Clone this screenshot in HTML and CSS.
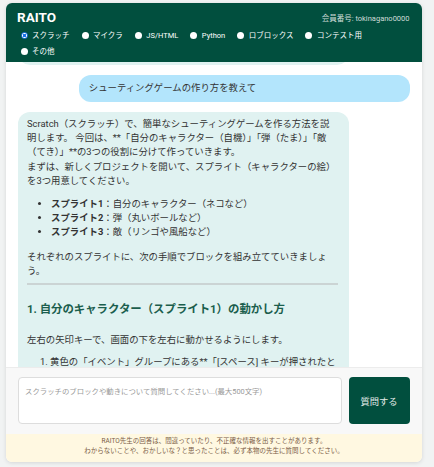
FILE: index.html
```html
<!DOCTYPE html>
<html lang="ja">
<head>
    <meta charset="UTF-8">
    <meta name="viewport" content="width=device-width, initial-scale=1.0">
    <title>RAITO</title>
    <link rel="stylesheet" href="styles.css">
</head>
<body>
    <div class="app">
        <header class="header">
            <div class="header-top">
                <h1 class="logo">RAITO</h1>
                <span class="member">会員番号: tokinagano0000</span>
            </div>
            <div class="courses">
                <label class="course"><input type="radio" name="course" value="scratch" checked>スクラッチ</label>
                <label class="course"><input type="radio" name="course" value="minecraft">マイクラ</label>
                <label class="course"><input type="radio" name="course" value="web">JS/HTML</label>
                <label class="course"><input type="radio" name="course" value="python">Python</label>
                <label class="course"><input type="radio" name="course" value="roblox">ロブロックス</label>
                <label class="course"><input type="radio" name="course" value="contest">コンテスト用</label>
                <label class="course"><input type="radio" name="course" value="other">その他</label>
            </div>
        </header>

        <main class="chat-log" id="chat-log">
            <div class="message bot">
                <p>こんにちは！RAITO先生です。スクラッチのことなら、なんでも聞いてくださいね。</p>
            </div>
            <div class="message user">シューティングゲームの作り方を教えて</div>
            <div class="message bot">
                <p>Scratch（スクラッチ）で、簡単なシューティングゲームを作る方法を説明します。 今回は、**「自分のキャラクター（自機）」「弾（たま）」「敵（てき）」**の3つの役割に分けて作っていきます。<br>まずは、新しくプロジェクトを開いて、スプライト（キャラクターの絵）を3つ用意してください。</p>
                <ul>
                    <li><strong>スプライト1</strong>：自分のキャラクター（ネコなど）</li>
                    <li><strong>スプライト2</strong>：弾（丸いボールなど）</li>
                    <li><strong>スプライト3</strong>：敵（リンゴや風船など）</li>
                </ul>
                <p>それぞれのスプライトに、次の手順でブロックを組み立てていきましょう。</p>
                <hr>
                <h3>1. 自分のキャラクター（スプライト1）の動かし方</h3>
                <p>左右の矢印キーで、画面の下を左右に動かせるようにします。</p>
                <ol>
                    <li>黄色の「イベント」グループにある**「[スペース] キーが押されたとき」**ブロックを置き、「スペース」を「右向き矢印」に変えます。</li>
                    <li>青色の「動き」グループから「x座標を10ずつ変える」をつなげます。</li>
                </ol>
            </div>
        </main>

        <div class="composer">
            <textarea placeholder="スクラッチのブロックや動きについて質問してください...(最大500文字)"></textarea>
            <button type="button">質問する</button>
        </div>

        <p class="notice">RAITO先生の回答は、間違っていたり、不正確な情報を出すことがあります。<br>わからないことや、おかしいな？と思ったことは、必ず本物の先生に質問してください。</p>
    </div>

    <script>
        // 最新の質問が上に来るようにスクロール
        const log = document.getElementById('chat-log');
        const questions = log.querySelectorAll('.message.user');
        const latest = questions[questions.length - 1];
        log.scrollTop = latest.offsetTop - 13;
    </script>
</body>
</html>
```

FILE: styles.css
```css
* {
    box-sizing: border-box;
}
html, body {
    height: 100%;
}
body {
    margin: 0;
    padding: 3px 12px 5px 6px;
    background-color: #f1f3f3;
    font-family: Roboto, "Noto Sans CJK JP", sans-serif;
    color: #333;
}
.app {
    height: 100%;
    display: flex;
    flex-direction: column;
    background-color: #fff;
    border-radius: 6px;
    box-shadow: 0 1px 4px rgba(0, 0, 0, 0.12);
    overflow: hidden;
}

/* ヘッダー */
.header {
    background-color: #014f3e;
    color: #fff;
    padding: 6px 12.5px 3px 11px;
}
.header-top {
    display: flex;
    justify-content: space-between;
    align-items: center;
}
.logo {
    margin: 0;
    font-size: 13.5px;
    line-height: 17px;
    font-weight: bold;
}
.member {
    font-size: 7.5px;
    color: #cfdcd8;
}
.courses {
    display: flex;
    flex-wrap: wrap;
    column-gap: 12px;
    margin-top: 2px;
    padding: 0 30px 0 3.5px;
}
.course {
    display: inline-flex;
    align-items: center;
    gap: 4.5px;
    height: 15.7px;
    line-height: 15.7px;
    font-size: 7.5px;
    color: #fff;
    cursor: pointer;
}
.course input {
    appearance: none;
    margin: 0;
    width: 7px;
    height: 7px;
    border-radius: 50%;
    background-color: #fff;
}
.course input:checked {
    border: 1px solid #1a73e8;
    background: radial-gradient(circle, #1a73e8 0 1.5px, #fff 1.9px);
}

/* チャット */
.chat-log {
    position: relative;
    flex: 1;
    overflow-y: auto;
    scrollbar-width: none;
    padding: 0 12px;
    display: flex;
    flex-direction: column;
    gap: 10px;
}
.message {
    flex-shrink: 0;
    width: 84.5%;
    border-radius: 12px;
    font-size: 9.4px;
    line-height: 14.4px;
}
.message.user {
    align-self: flex-end;
    background-color: #b3e5fc;
    padding: 6px 10px;
}
.message.bot {
    align-self: flex-start;
    background-color: #e0f2f1;
    padding: 5px 11px 5px 9px;
}
.message p {
    margin: 0;
}
.message ul {
    margin: 8px 0 10px;
    padding-left: 24px;
}
.message ol {
    margin: 8px 0;
    padding-left: 23px;
}
.message hr {
    border: none;
    border-top: 2px solid #cbd4d4;
    margin: 4px 0 17px;
}
.message h3 {
    margin: 0 0 16px;
    font-size: 11.4px;
    line-height: 15px;
    color: #1b5e4d;
}

/* 入力欄 */
.composer {
    display: flex;
    gap: 6.5px;
    padding: 9px 12.5px 10px 12px;
    background-color: #f8f8f8;
    border-top: 1px solid #ececec;
}
.composer textarea {
    flex: 1;
    height: 47px;
    resize: none;
    border: 1px solid #ddd;
    border-radius: 4px;
    padding: 8px 6px;
    font-family: inherit;
    font-size: 7.4px;
    line-height: 11px;
    background-color: #fff;
}
.composer textarea::placeholder {
    color: #9a9a9a;
}
.composer button {
    width: 61px;
    height: 47px;
    border: none;
    border-radius: 4px;
    background-color: #014f3e;
    color: #e3ebe8;
    font-family: inherit;
    font-size: 9.3px;
    cursor: pointer;
}

/* 注意書き */
.notice {
    margin: 0;
    padding: 3px 10px 6px;
    background-color: #fff8e1;
    color: #7a5b46;
    font-size: 6.5px;
    line-height: 9.3px;
    text-align: center;
}
```
